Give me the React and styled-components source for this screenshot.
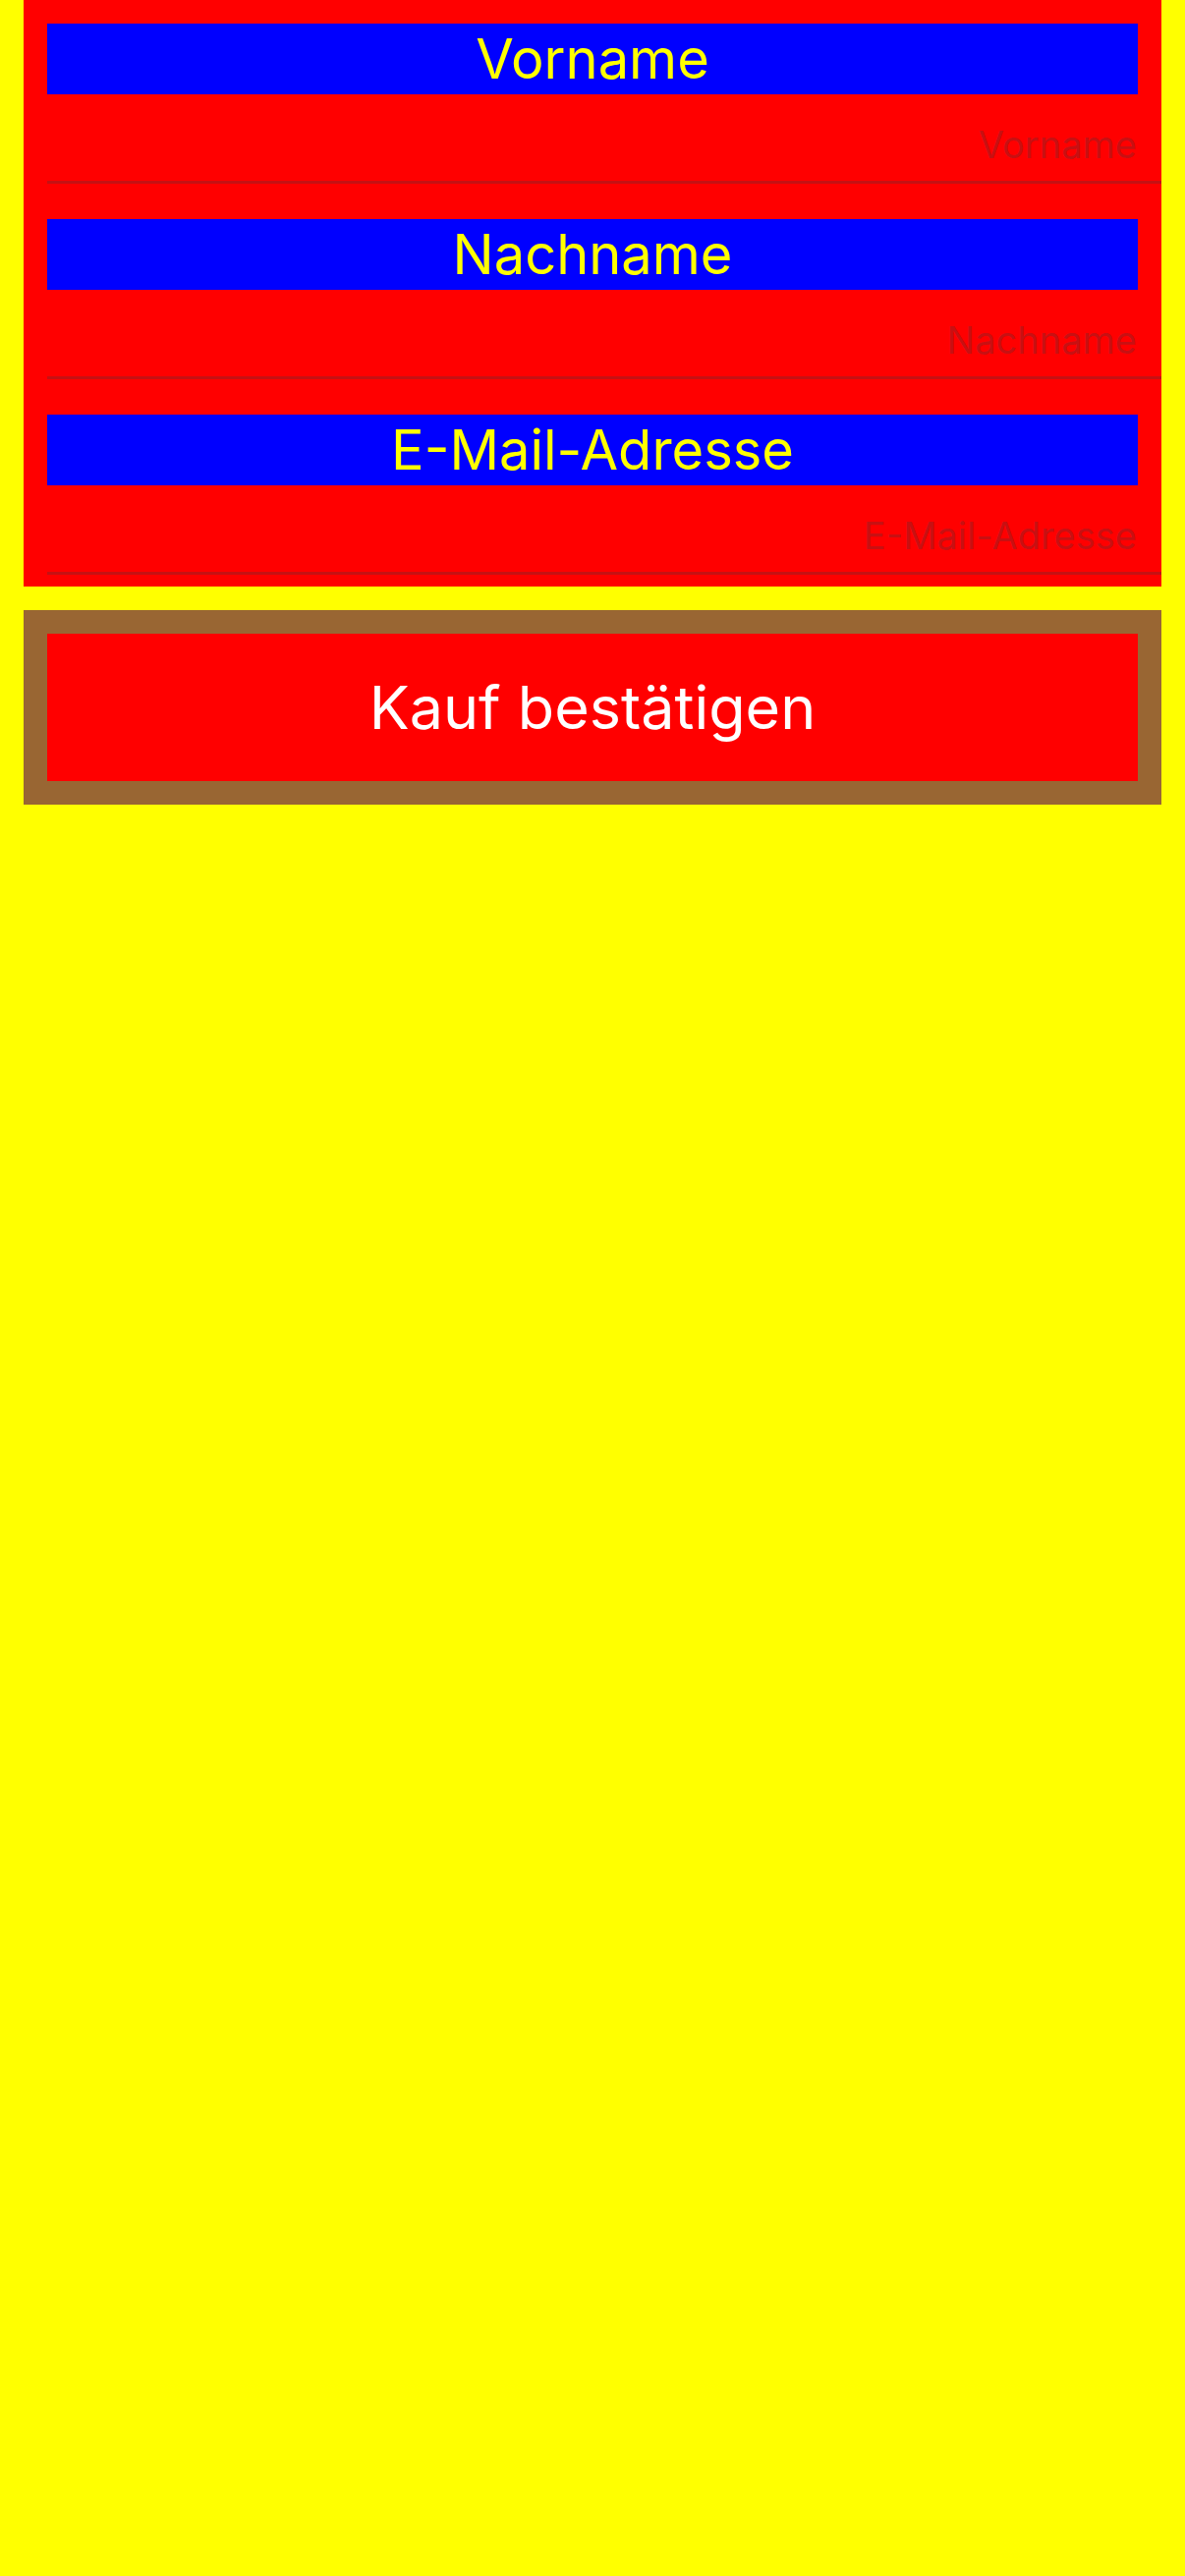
import styled, { createGlobalStyle } from "styled-components"

const GlobalStyle = createGlobalStyle`
  html, body {
    margin: 0;
    padding: 0;
    background: #ffff00;
    min-height: 100%;
  }

  body {
    font-family: Inter, "Noto Sans", "Liberation Sans", sans-serif;
  }
`

const Page = styled.main`
  display: flex;
  flex-direction: column;
  gap: 24px;
  padding: 0 24px;
  min-height: 2622px;
  box-sizing: border-box;
  background: #ffff00;
`

const FormPanel = styled.section`
  display: flex;
  flex-direction: column;
  gap: 12px;
  padding: 0 0 12px 24px;
  background: #ff0000;
`

const FieldRow = styled.div`
  display: flex;
  flex-direction: column;
  padding-top: 24px;
  border-bottom: 3px solid rgba(60, 60, 67, 0.29);
`

const FieldLabel = styled.label`
  display: flex;
  align-items: center;
  justify-content: center;
  height: 72px;
  margin-right: 24px;
  background: #0000ff;
  color: #ffff00;
  font-size: 56px;
  font-weight: 400;
`

const FieldInput = styled.input`
  height: 88px;
  box-sizing: border-box;
  padding: 14px 25px 0 0;
  margin: 0;
  border: none;
  outline: none;
  background: transparent;
  text-align: right;
  font-family: inherit;
  font-size: 38px;
  color: #000;

  &::placeholder {
    color: rgba(60, 60, 67, 0.3);
  }
`

const ButtonFrame = styled.div`
  display: flex;
  padding: 24px;
  background: #996633;
`

const ConfirmButton = styled.button`
  flex: 1;
  height: 150px;
  border: none;
  background: #ff0000;
  color: #ffffff;
  font-family: inherit;
  font-size: 61px;
  font-weight: 400;
  cursor: pointer;
`

const fields = [
  { id: "vorname", label: "Vorname" },
  { id: "nachname", label: "Nachname" },
  { id: "email", label: "E-Mail-Adresse" },
]

export default function App() {
  return (
    <>
      <GlobalStyle />
      <Page>
        <FormPanel>
          {fields.map((field) => (
            <FieldRow key={field.id}>
              <FieldLabel htmlFor={field.id}>{field.label}</FieldLabel>
              <FieldInput id={field.id} placeholder={field.label} />
            </FieldRow>
          ))}
        </FormPanel>

        <ButtonFrame>
          <ConfirmButton>Kauf bestätigen</ConfirmButton>
        </ButtonFrame>
      </Page>
    </>
  )
}
